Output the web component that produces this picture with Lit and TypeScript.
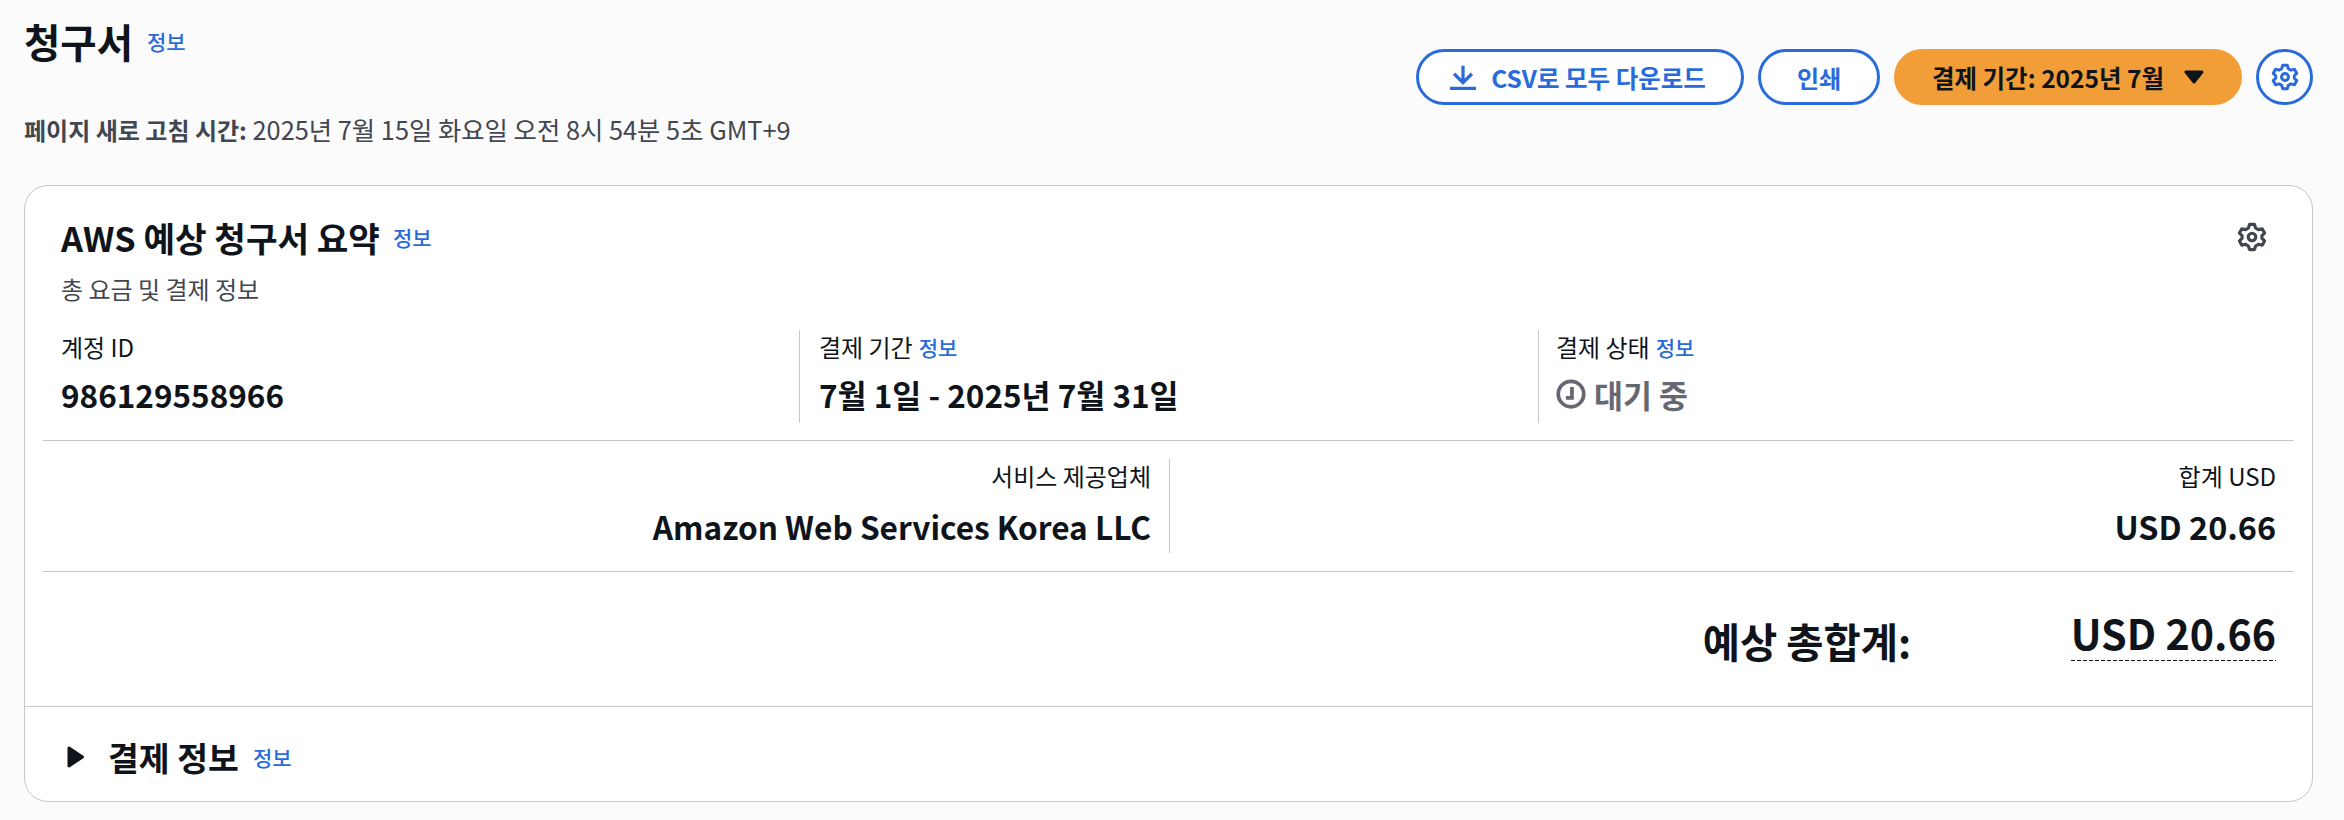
import { LitElement, html, css } from "lit";
import { customElement } from "lit/decorators.js";

const gear = (cls: string) => html`<svg class=${cls} viewBox="0 0 16 16" fill="none" stroke="currentColor" stroke-width="1.700" stroke-linejoin="round"><path d="M6.700 1.300h2.600l.6 1.900 1.500.9 2-.5 1.300 2.300-1.400 1.400v1.400l1.400 1.400-1.300 2.300-2-.5-1.500.9-.6 1.900H6.700l-.6-1.900-1.500-.9-2 .5-1.300-2.300 1.400-1.400V7.300L1.300 5.900l1.300-2.300 2 .5 1.500-.9z"/><circle cx="8" cy="8" r="2"/></svg>`;

const info = html`<a class="info">정보</a>`;

@customElement("app-root")
export class AppRoot extends LitElement {
  static styles = css`
    :host { display: block; height: 820px; background: #fbfbfb; color: #0f141a; font-family: "Noto Sans CJK KR", sans-serif; font-size: 24px; box-sizing: border-box; padding: 0 31px 0 24px; }
    * { box-sizing: border-box; }
    .info { color: #2a6bdc; font-size: 21px; font-weight: 500; }
    .head { height: 185px; display: flex; justify-content: space-between; position: relative; }
    .title { padding-top: 17px; }
    h1 { margin: 0; display: flex; align-items: center; gap: 14px; font-size: 39.500px; line-height: 48px; font-weight: 700; }
    .refresh { margin: 50px 0 0; line-height: 28px; font-size: 25.350px; color: #424650; white-space: nowrap; }
    .refresh b { font-weight: 700; font-size: 24px; }
    .actions { display: flex; gap: 14px; padding-top: 49px; align-items: flex-start; }
    .btn { height: 56px; border-radius: 28px; border: 3px solid #2a6bdc; color: #2a6bdc; background: #fff; font-weight: 700; font-size: 24.500px; display: flex; align-items: center; justify-content: center; }
    .csv { width: 328px; gap: 15px; padding-right: 4px; }
    .csv svg { width: 26px; height: 26px; }
    .print { width: 122px; font-size: 24px; }
    .period { width: 348px; background: #f29e38; border-color: #f29e38; color: #0f141a; gap: 20px; }
    .period svg { width: 20px; height: 14px; }
    .gearbtn { width: 57px; }
    .gearbtn svg { width: 28px; height: 28px; }
    .card { height: 617px; background: #fff; border: 1.5px solid #c6c6cd; border-radius: 24px; display: flex; flex-direction: column; }
    .cardtop { height: 519.5px; padding: 0 18px; display: flex; flex-direction: column; }
    .cardhead { height: 144px; padding: 30px 18px 0; position: relative; }
    h2 { margin: 0; font-size: 34.300px; line-height: 42px; font-weight: 700; display: flex; align-items: center; gap: 13px; }
    .sub { margin-top: 17px; font-size: 24px; color: #424650; line-height: 28px; }
    .cardgear { position: absolute; right: 27px; top: 36px; width: 30px; height: 30px; color: #424650; }
    .row3 { display: grid; grid-template-columns: 756px 739px 1fr; height: 111px; border-bottom: 1.5px solid #c6c6cd; align-items: start; }
    .col { height: 93px; padding: 0 18px; }
    .col + .col { border-left: 1.5px solid #c6c6cd; padding-left: 19px; }
    .col.c3 { padding-left: 17px; }
    .lab { font-size: 24px; line-height: 30px; display: flex; gap: 6px; align-items: center; color: #0f141a; margin-top: 2px; }
    .val { font-size: 31.500px; font-weight: 700; line-height: 42px; margin-top: 14px; }
    .val.usd { font-size: 32.400px; }
    .val.amz { font-size: 31.600px; }
    .row3 .val { margin-top: 11px; }
    .pending { color: #656871; display: flex; align-items: center; gap: 8px; }
    .pending svg { width: 30px; height: 30px; }
    .row2 { display: grid; grid-template-columns: 1127px 1fr; height: 131px; padding-top: 18px; border-bottom: 1.5px solid #c6c6cd; align-items: start; text-align: right; }
    .row2 .col { height: 94px; }
    .row2 .lab { justify-content: flex-end; }
    .row2 .col + .col { border: 0; }
    .row2 .col:first-child { border-right: 1.5px solid #c6c6cd; }
    .total { flex: 1; display: flex; justify-content: flex-end; align-items: center; padding-right: 18px; padding-top: 4px; }
    .total .l { font-size: 40.500px; font-weight: 700; width: 368px; }
    .total .v { font-size: 41.200px; font-weight: 700; line-height: 44px; padding-bottom: 7px; margin-bottom: 10px; background: repeating-linear-gradient(90deg, #0f141a 0 4px, transparent 4px 6px) left bottom / 100% 1.5px no-repeat; }
    .foot { flex: 1; border-top: 1.5px solid #c6c6cd; display: flex; align-items: center; padding-left: 42px; padding-top: 6px; }
    .foot svg { width: 20px; height: 24px; margin-right: 21px; }
    .foot h3 { margin: 0 14px 0 0; font-size: 33.500px; font-weight: 700; line-height: 44px; }
  `;

  render() {
    return html`
      <div class="head">
        <div class="title">
          <h1>청구서 ${info}</h1>
          <p class="refresh"><b>페이지 새로 고침 시간:</b> 2025년 7월 15일 화요일 오전 8시 54분 5초 GMT+9</p>
        </div>
        <div class="actions">
          <div class="btn csv">
            <svg viewBox="0 0 16 16" fill="none" stroke="currentColor" stroke-width="2"><path d="M0 15h16M8 1v10M2.500 6 8 11.500 13.500 6"/></svg>
            <span>CSV로 모두 다운로드</span>
          </div>
          <div class="btn print">인쇄</div>
          <div class="btn period"><span>결제 기간: 2025년 7월</span><svg viewBox="0 0 20 14"><path d="M2 2h16l-8 10z" fill="#0f141a" stroke="#0f141a" stroke-width="3" stroke-linejoin="round"/></svg></div>
          <div class="btn gearbtn">${gear("")}</div>
        </div>
      </div>
      <div class="card">
        <div class="cardtop">
          <div class="cardhead">
            <h2>AWS 예상 청구서 요약 ${info}</h2>
            <div class="sub">총 요금 및 결제 정보</div>
            ${gear("cardgear")}
          </div>
          <div class="row3">
            <div class="col"><div class="lab">계정 ID</div><div class="val">986129558966</div></div>
            <div class="col"><div class="lab">결제 기간 ${info}</div><div class="val">7월 1일 - 2025년 7월 31일</div></div>
            <div class="col c3"><div class="lab">결제 상태 ${info}</div>
              <div class="val pending">
                <svg viewBox="0 0 16 16" fill="none" stroke="currentColor" stroke-width="2"><circle cx="8" cy="8" r="6.800"/><path d="M8.500 4.300V10H5.300"/></svg>
                <span>대기 중</span>
              </div>
            </div>
          </div>
          <div class="row2">
            <div class="col"><div class="lab">서비스 제공업체</div><div class="val amz">Amazon Web Services Korea LLC</div></div>
            <div class="col"><div class="lab">합계 USD</div><div class="val usd">USD 20.66</div></div>
          </div>
          <div class="total"><span class="l">예상 총합계:</span><span class="v">USD 20.66</span></div>
        </div>
        <div class="foot">
          <svg viewBox="0 0 20 24"><path d="M2 3 15.500 12 2 21z" fill="#0f141a" stroke="#0f141a" stroke-width="3" stroke-linejoin="round"/></svg>
          <h3>결제 정보</h3>${info}
        </div>
      </div>
    `;
  }
}
